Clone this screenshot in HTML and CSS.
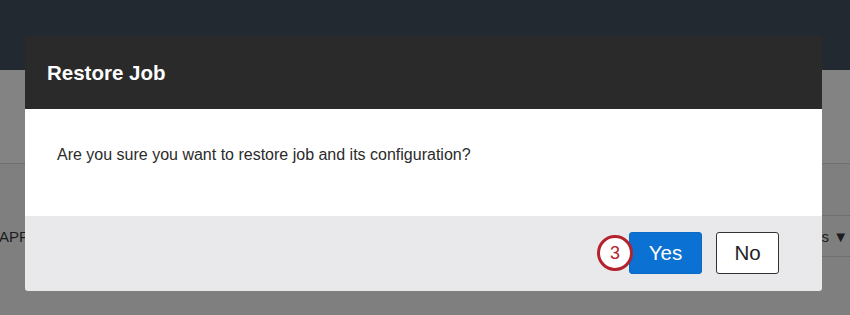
FILE: index.html
```html
<!DOCTYPE html>
<html lang="en">
<head>
<meta charset="utf-8">
<title>Restore Job</title>
<link rel="stylesheet" href="styles.css">
</head>
<body>
<div class="page">
  <div class="topbar"></div>
  <div class="subheader"></div>
  <div class="main">
    <div class="filter-row">
      <span class="apps">APPLICATIONS</span>
      <span class="filters">Columns ▼</span>
    </div>
  </div>
</div>

<div class="dialog" role="dialog" aria-labelledby="dlg-title">
  <div class="dialog-header">
    <h2 id="dlg-title" class="dialog-title">Restore Job</h2>
  </div>
  <div class="dialog-body">
    <p class="dialog-text">Are you sure you want to restore job and its configuration?</p>
  </div>
  <div class="dialog-footer">
    <div class="btn-wrap">
      <span class="step-badge">3</span>
      <button class="btn btn-primary">Yes</button>
    </div>
    <button class="btn btn-secondary">No</button>
  </div>
</div>
</body>
</html>
```

FILE: styles.css
```css
* { box-sizing: border-box; }

html, body {
  margin: 0;
  padding: 0;
  width: 850px;
  height: 315px;
  overflow: hidden;
  font-family: "Liberation Sans", Arial, Helvetica, sans-serif;
  background: #7f7f7f;
}

.page {
  display: flex;
  flex-direction: column;
  height: 315px;
}

.topbar {
  height: 70px;
  background: #222931;
  flex: none;
}

.subheader {
  height: 94px;
  background: #838383;
  border-bottom: 1px solid #6f6f6f;
  flex: none;
}

.main {
  flex: 1;
  background: #7f7f7f;
  padding-top: 51px;
}

.filter-row {
  display: flex;
  justify-content: space-between;
  align-items: center;
  height: 42px;
}

.apps {
  font-size: 15px;
  color: #1c1c1c;
  margin-left: -1px;
}

.filters {
  font-size: 15px;
  color: #1c1c1c;
  height: 42px;
  display: flex;
  align-items: center;
  padding: 0 2px 0 10px;
  border-top: 1px solid #6f6f6f;
  border-bottom: 1px solid #6f6f6f;
}

/* Dialog overlaying the dimmed page */
.dialog {
  position: absolute;
  left: 25px;
  top: 36px;
  width: 797px;
  display: flex;
  flex-direction: column;
  border-radius: 0 0 3px 3px;
  overflow: hidden;
}

.dialog-header {
  height: 73px;
  background: #2a2a2a;
  display: flex;
  align-items: center;
  padding-left: 22px;
}

.dialog-title {
  margin: 0;
  color: #ffffff;
  font-size: 20.5px;
  font-weight: bold;
}

.dialog-body {
  height: 107px;
  background: #ffffff;
  padding: 37px 32px 0;
}

.dialog-text {
  margin: 0;
  font-size: 16px;
  line-height: 18px;
  color: #2b2b2b;
}

.dialog-footer {
  height: 75px;
  background: #e9e9eb;
  display: flex;
  justify-content: flex-end;
  align-items: flex-start;
  gap: 14px;
  padding: 16px 43px 0 0;
}

.btn-wrap {
  position: relative;
  display: flex;
}

.btn {
  height: 42px;
  border-radius: 3px;
  font-family: "Liberation Sans", Arial, Helvetica, sans-serif;
  font-size: 20.5px;
  padding: 0;
  cursor: pointer;
}

.btn-primary {
  width: 73px;
  background: #0b71d3;
  color: #ffffff;
  border: 1px solid #0b6ac6;
}

.btn-secondary {
  width: 63px;
  background: #ffffff;
  color: #222222;
  border: 1.5px solid #333333;
}

.step-badge {
  position: absolute;
  left: -32px;
  top: 3px;
  width: 36px;
  height: 36px;
  border-radius: 50%;
  border: 3px solid #b3222d;
  background: #ffffff;
  color: #b3222d;
  font-size: 18px;
  display: flex;
  align-items: center;
  justify-content: center;
  z-index: 1;
}
```
